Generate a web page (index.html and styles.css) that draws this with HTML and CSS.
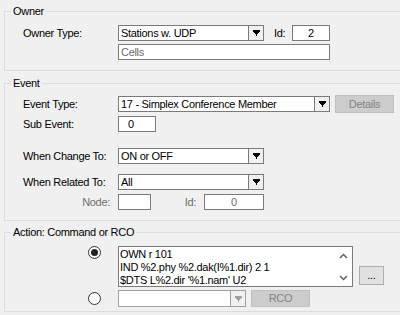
FILE: index.html
```html
<!DOCTYPE html>
<html lang="en">
<head>
    <meta charset="UTF-8">
    <title>Event Action</title>
    <link rel="stylesheet" href="styles.css">
</head>
<body>

<fieldset class="group owner">
    <legend>Owner</legend>
    <div class="group-body">
        <div class="row">
            <span class="label">Owner Type:</span>
            <div class="combo combo-short">
                <span class="combo-text">Stations w. UDP</span>
                <span class="combo-btn"><svg width="7" height="6" viewBox="0 0 7 6"><path d="M0 0h7v2h-1v1h-1v1h-1v2h-1v-2h-1v-1h-1v-1h-1z" fill="#000"/></svg></span>
            </div>
            <span class="id-label">Id:</span>
            <div class="field id-field center">2</div>
        </div>
        <div class="row">
            <span class="label"></span>
            <div class="field field-wide muted">Cells</div>
        </div>
    </div>
</fieldset>

<fieldset class="group event">
    <legend>Event</legend>
    <div class="group-body">
        <div class="row row-tall">
            <span class="label">Event Type:</span>
            <div class="combo combo-wide">
                <span class="combo-text">17 - Simplex Conference Member</span>
                <span class="combo-btn"><svg width="7" height="6" viewBox="0 0 7 6"><path d="M0 0h7v2h-1v1h-1v1h-1v2h-1v-2h-1v-1h-1v-1h-1z" fill="#000"/></svg></span>
            </div>
            <span class="btn btn-off">Details</span>
        </div>
        <div class="row sub-row">
            <span class="label">Sub Event:</span>
            <div class="field sub-field">0</div>
        </div>
        <div class="row change-row">
            <span class="label">When Change To:</span>
            <div class="combo combo-short">
                <span class="combo-text">ON or OFF</span>
                <span class="combo-btn"><svg width="7" height="6" viewBox="0 0 7 6"><path d="M0 0h7v2h-1v1h-1v1h-1v2h-1v-2h-1v-1h-1v-1h-1z" fill="#000"/></svg></span>
            </div>
        </div>
        <div class="row related-row">
            <span class="label">When Related To:</span>
            <div class="combo combo-short">
                <span class="combo-text">All</span>
                <span class="combo-btn"><svg width="7" height="6" viewBox="0 0 7 6"><path d="M0 0h7v2h-1v1h-1v1h-1v2h-1v-2h-1v-1h-1v-1h-1z" fill="#000"/></svg></span>
            </div>
        </div>
        <div class="row node-row">
            <span class="label label-right muted">Node:</span>
            <div class="field node-field"></div>
            <span class="node-id muted">Id:</span>
            <div class="field node-id-field center muted">0</div>
        </div>
    </div>
</fieldset>

<fieldset class="group action">
    <legend>Action: Command or RCO</legend>
    <div class="group-body">
        <div class="row row-top">
            <span class="radio-cell"><span class="radio checked"></span></span>
            <div class="memo">
                <div class="memo-text">OWN r 101<br>IND %2.phy %2.dak(I%1.dir) 2 1<br>$DTS L%2.dir '%1.nam' U2</div>
                <div class="memo-scroll">
                    <span class="scroll-btn"><svg width="9" height="6" viewBox="0 0 9 6"><path d="M1 5l3.5-3.5L8 5" fill="none" stroke="#606060" stroke-width="1.5"/></svg></span>
                    <span class="scroll-btn"><svg width="9" height="6" viewBox="0 0 9 6"><path d="M1 1l3.5 3.5L8 1" fill="none" stroke="#606060" stroke-width="1.5"/></svg></span>
                </div>
            </div>
            <span class="btn btn-dots">...</span>
        </div>
        <div class="row rco-row">
            <span class="radio-cell"><span class="radio"></span></span>
            <div class="combo combo-rco combo-off">
                <span class="combo-text"></span>
                <span class="combo-btn"><svg width="7" height="6" viewBox="0 0 7 6"><path d="M0 0h7v2h-1v1h-1v1h-1v2h-1v-2h-1v-1h-1v-1h-1z" fill="#a0a0a0"/></svg></span>
            </div>
            <span class="btn btn-off btn-rco">RCO</span>
        </div>
    </div>
</fieldset>

</body>
</html>
```

FILE: styles.css
```css
* {
    box-sizing: border-box;
}
html, body {
    margin: 0;
}
body {
    width: 400px;
    height: 315px;
    overflow: hidden;
    background-color: #f0f0f0;
    font-family: "Liberation Sans", Arial, sans-serif;
    font-size: 11px;
    letter-spacing: -0.3px;
    color: #000;
}
.group {
    margin: 0 -10px 0 4px;
    padding: 0;
    border: 1px solid #dcdcdc;
    min-width: 0;
}
.group legend {
    margin-left: 6px;
    padding: 0 2px;
    line-height: 13px;
}
.owner {
    margin-top: 5px;
}
.event {
    margin-top: 6px;
}
.action {
    margin-top: 5px;
}
.group-body {
    display: flex;
    flex-direction: column;
    padding-left: 18px;
}
.owner .group-body {
    padding-top: 7px;
    padding-bottom: 10px;
    gap: 3px;
}
.event .group-body {
    padding-top: 5px;
    padding-bottom: 10px;
}
.action .group-body {
    padding-top: 7px;
    padding-bottom: 4px;
}
.row {
    display: flex;
    align-items: center;
    height: 16px;
}
.row-tall {
    height: 18px;
}
.sub-row {
    margin-top: 3px;
}
.change-row {
    margin-top: 16px;
}
.related-row {
    margin-top: 10px;
}
.node-row {
    margin-top: 4px;
}
.label {
    width: 95px;
    flex: none;
    white-space: nowrap;
}
.label-right {
    text-align: right;
    padding-right: 8px;
}
.muted {
    color: #6d6d6d;
}
.center {
    text-align: center;
}
.field, .combo {
    height: 16px;
    flex: none;
    border: 1px solid #7a7a7a;
    background-color: #fff;
    line-height: 14px;
    white-space: nowrap;
}
.field {
    padding: 0 2px;
}
.field-wide {
    width: 212px;
}
.id-label {
    width: 18px;
    margin-left: 10px;
}
.id-field {
    width: 38px;
}
.sub-field {
    width: 38px;
    padding-left: 9px;
}
.node-field {
    width: 33px;
}
.node-id {
    width: 53px;
    text-align: right;
    padding-right: 8px;
}
.node-id-field {
    width: 60px;
}
.combo {
    display: flex;
}
.combo-short {
    width: 146px;
}
.combo-wide {
    width: 212px;
}
.combo-text {
    flex: 1;
    padding-left: 2px;
    overflow: hidden;
}
.combo-btn {
    width: 15px;
    flex: none;
    border-left: 1px solid #7a7a7a;
    background-color: #f0f0f0;
    display: flex;
    align-items: center;
    justify-content: center;
}
.combo-off {
    border-color: #a0a0a0;
}
.combo-off .combo-btn {
    border-left-color: #a0a0a0;
}
.combo-rco {
    width: 128px;
    height: 17px;
}
.btn {
    flex: none;
    text-align: center;
    white-space: nowrap;
}
.btn-off {
    width: 59px;
    height: 18px;
    margin-left: 5px;
    line-height: 16px;
    background-color: #cccccc;
    border: 1px solid #bfbfbf;
    color: #838383;
}
.btn-rco {
    height: 17px;
    line-height: 15px;
}
.btn-dots {
    width: 25px;
    height: 19px;
    margin: 20px 0 0 6px;
    line-height: 17px;
    background-color: #e1e1e1;
    border: 1px solid #adadad;
}
.row-top {
    height: auto;
    align-items: flex-start;
}
.rco-row {
    height: 17px;
    margin-top: 3px;
}
.radio-cell {
    width: 95px;
    flex: none;
    padding-left: 65px;
    display: flex;
}
.radio {
    width: 13px;
    height: 13px;
    border: 1px solid #333;
    border-radius: 50%;
    background-color: #fff;
    display: flex;
    align-items: center;
    justify-content: center;
}
.radio.checked::after {
    content: "";
    width: 7px;
    height: 7px;
    border-radius: 50%;
    background-color: #222;
}
.memo {
    width: 235px;
    height: 41px;
    flex: none;
    display: flex;
    border: 1px solid #7a7a7a;
    background-color: #fff;
}
.memo-text {
    flex: 1;
    padding: 1px 1px 0;
    line-height: 13px;
    white-space: nowrap;
    overflow: hidden;
}
.memo-scroll {
    width: 17px;
    flex: none;
    display: flex;
    flex-direction: column;
    justify-content: space-between;
    background-color: #fff;
}
.scroll-btn {
    height: 17px;
    display: flex;
    align-items: center;
    justify-content: center;
}
```
